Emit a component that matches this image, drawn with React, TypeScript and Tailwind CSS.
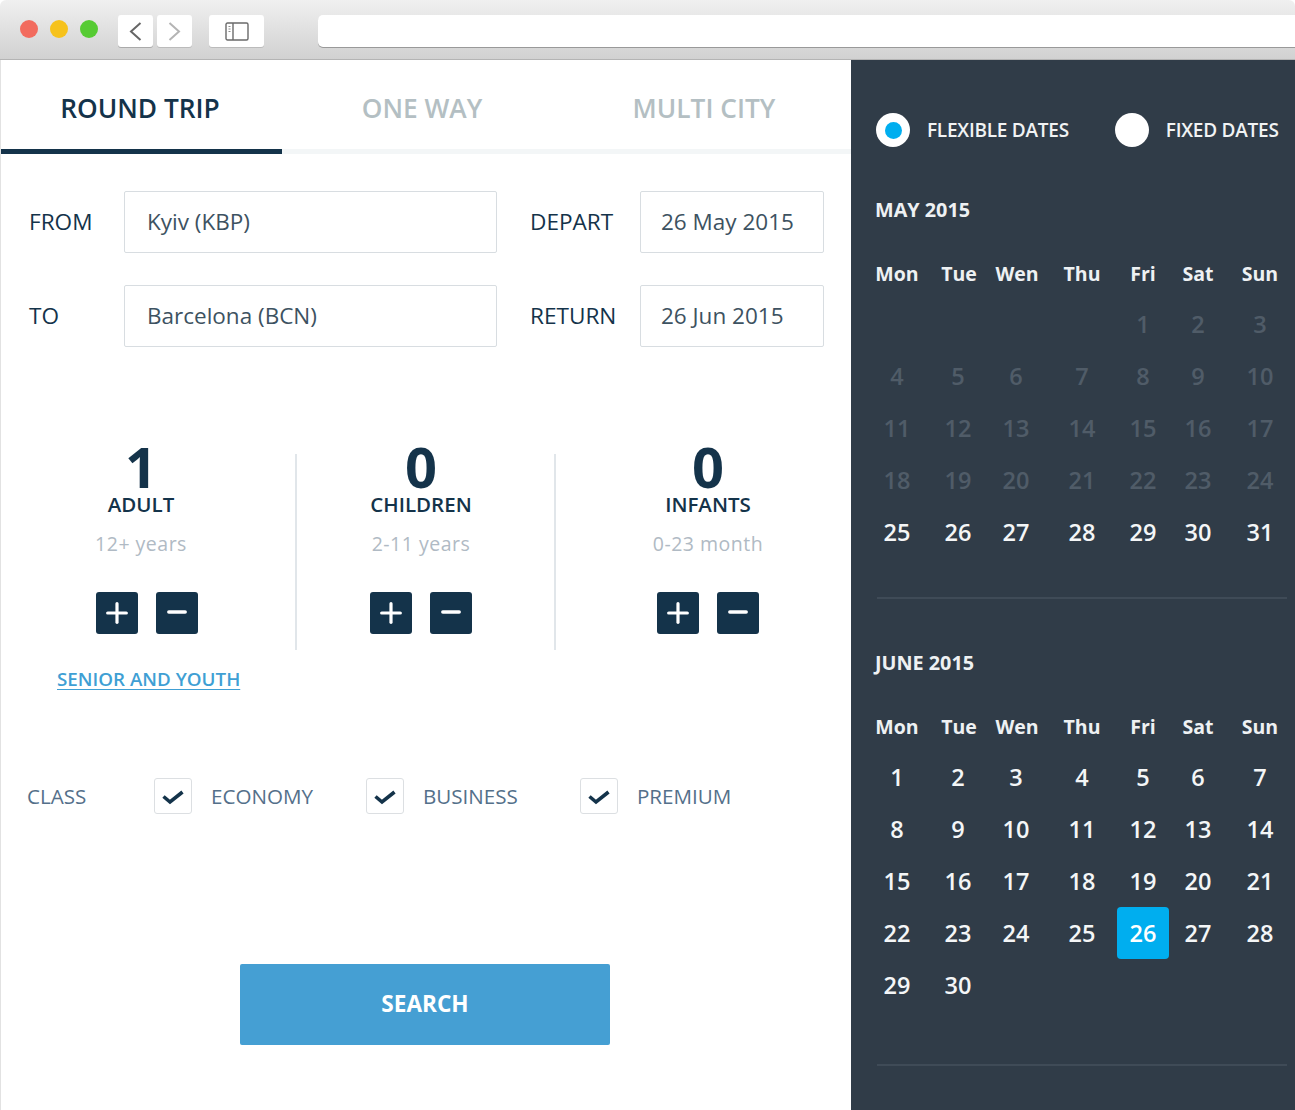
import { Minus, Plus } from "lucide-react";

const WEEK = ["Mon", "Tue", "Wen", "Thu", "Fri", "Sat", "Sun"];

const MAY = [
  ["", "", "", "", "1", "2", "3"],
  ["4", "5", "6", "7", "8", "9", "10"],
  ["11", "12", "13", "14", "15", "16", "17"],
  ["18", "19", "20", "21", "22", "23", "24"],
  ["25", "26", "27", "28", "29", "30", "31"],
];

const JUNE = [
  ["1", "2", "3", "4", "5", "6", "7"],
  ["8", "9", "10", "11", "12", "13", "14"],
  ["15", "16", "17", "18", "19", "20", "21"],
  ["22", "23", "24", "25", "26", "27", "28"],
  ["29", "30", "", "", "", "", ""],
];

function Toolbar() {
  return (
    <div className="flex h-[60px] items-start rounded-t-[6px] border-b border-[#b4b4b4] bg-gradient-to-b from-[#f0f0f0] to-[#d1d1d1] pt-[15px]">
      <div className="ml-[20px] mt-[5px] flex gap-[12px]">
        <div className="h-[18px] w-[18px] rounded-full bg-[#f26b5e]" />
        <div className="h-[18px] w-[18px] rounded-full bg-[#f6c21c]" />
        <div className="h-[18px] w-[18px] rounded-full bg-[#56cb33]" />
      </div>
      <div className="ml-[20px] flex h-[32px] w-[35px] items-center justify-center rounded-[3px] bg-white shadow-[0_1px_0_#aaa]">
        <svg width="13" height="19" viewBox="0 0 13 19" fill="none">
          <path d="M11.5 1L2 9.5l9.5 8.5" stroke="#666" strokeWidth="2" />
        </svg>
      </div>
      <div className="ml-[4px] flex h-[32px] w-[35px] items-center justify-center rounded-[3px] bg-white shadow-[0_1px_0_#bbb]">
        <svg width="13" height="19" viewBox="0 0 13 19" fill="none">
          <path d="M1.5 1L11 9.5 1.5 18" stroke="#b4b4b4" strokeWidth="2" />
        </svg>
      </div>
      <div className="ml-[17px] flex h-[32px] w-[55px] items-center justify-center rounded-[3px] bg-white shadow-[0_1px_0_#bbb]">
        <svg width="24" height="19" viewBox="0 0 24 19" fill="none">
          <rect x="1" y="1" width="22" height="17" rx="1.5" stroke="#6a6a6a" strokeWidth="1.4" />
          <path d="M8 1v17" stroke="#6a6a6a" strokeWidth="1.4" />
          <path d="M3.5 4.5h2M3.5 7h2M3.5 9.5h2" stroke="#8a8a8a" strokeWidth="1" />
        </svg>
      </div>
      <div className="ml-[54px] h-[32px] flex-1 rounded-l-[5px] bg-white shadow-[0_1px_0_#999]" />
    </div>
  );
}

function Tabs() {
  return (
    <div className="flex h-[94px] border-b-[5px] border-[#f3f6f7] text-[26.3px] font-semibold leading-[36px]">
      <div className="mb-[-5px] flex w-[281px] justify-center border-b-[5px] border-[#14334a] pr-[3px] pt-[30px] text-[#14334a]">ROUND TRIP</div>
      <div className="flex w-[282px] justify-center pr-[2px] pt-[30px] text-[#b4bfc3]">ONE WAY</div>
      <div className="flex w-[282px] justify-center pr-[2px] pt-[30px] text-[#b4bfc3]">MULTI CITY</div>
    </div>
  );
}

function Field({ label, value, labelW, w, pl }: { label: string; value: string; labelW: string; w: string; pl: string }) {
  return (
    <div className="flex items-center">
      <div className={`${labelW} pb-[1px] text-[22.6px] text-[#14334a]`}>{label}</div>
      <div className={`${w} ${pl} flex h-[62px] items-center rounded-[2px] border border-[#d8dde1] pb-[1px] text-[22.5px] text-[#3d5261]`}>{value}</div>
    </div>
  );
}

function Counter({ n, title, sub, cls, btnCls }: { n: string; title: string; sub: string; cls: string; btnCls?: string }) {
  return (
    <div className={`${cls} flex flex-col items-center`}>
      <div className="mt-[-10px] text-[56px] font-bold leading-[44px] text-[#14334a]">{n}</div>
      <div className="mt-[2px] text-[20.5px] font-semibold leading-[28px] text-[#14334a]">{title}</div>
      <div className="mt-[12px] text-[19.5px] leading-[28px] tracking-[0.5px] text-[#b0bac4]">{sub}</div>
      <div className={`${btnCls ?? ""} mt-[34px] flex gap-[18px]`}>
        <div className="flex h-[42px] w-[42px] items-center justify-center rounded-[3px] bg-[#14334a] text-white">
          <Plus size={32} strokeWidth={2.4} />
        </div>
        <div className="flex h-[42px] w-[42px] items-center justify-center rounded-[3px] bg-[#14334a] text-white">
          <Minus size={28} strokeWidth={3} className="mt-[-3px]" />
        </div>
      </div>
    </div>
  );
}

function ClassBox({ label, ml }: { label: string; ml: string }) {
  return (
    <div className={`${ml} flex items-center`}>
      <div className="flex h-[36px] w-[38px] items-center justify-center rounded-[3px] border border-[#dcdfe2]">
        <svg width="22" height="15" viewBox="0 0 22 15" fill="none" className="mt-[2px]">
          <path d="M1.5 6.5L8 12L20.5 2" stroke="#14334a" strokeWidth="3.6" />
        </svg>
      </div>
      <div className="ml-[19px] text-[20.6px] text-[#54708a]">{label}</div>
    </div>
  );
}

function Month({ title, rows, muted, today }: { title: string; rows: string[][]; muted: number; today?: string }) {
  return (
    <div>
      <div className="ml-[24px] text-[19.8px] font-bold leading-[26px] text-[#eef1f3]">{title}</div>
      <div className="mt-[38px] grid grid-cols-[62px_62px_54px_76px_46px_64px_60px] pl-[15px]">
        {WEEK.map((d) => (
          <div key={d} className="flex h-[26px] items-center justify-center text-[19.5px] font-bold text-[#eef1f3]">{d}</div>
        ))}
      </div>
      <div className="mt-[12px] grid grid-cols-[62px_60px_56px_76px_46px_64px_60px] grid-rows-[repeat(5,52px)] pl-[15px]">
        {rows.map((row, i) =>
          row.map((d, j) => (
            <div
              key={`${i}-${j}`}
              className={`flex items-center justify-center text-[23.5px] font-semibold ${i < muted ? "text-[#505c68]" : "text-[#f4f6f7]"}`}
            >
              {d === today ? (
                <div className="mt-[-2px] flex h-[52px] w-[52px] shrink-0 items-center justify-center rounded-[4px] bg-[#00aeef] pt-[2px] text-white">{d}</div>
              ) : (
                d
              )}
            </div>
          ))
        )}
      </div>
    </div>
  );
}

export default function App() {
  return (
    <div className="flex h-[1110px] w-[1295px] flex-col overflow-hidden bg-white font-['Open_Sans',sans-serif]">
      <Toolbar />
      <div className="flex flex-1">
        <div className="w-[851px] border-l border-[#e2e2e2]">
          <Tabs />
          <div className="flex flex-col gap-[32px] pt-[37px]">
            <div className="flex pl-[28px]">
              <Field label="FROM" value="Kyiv (KBP)" labelW="w-[95px]" w="w-[373px]" pl="pl-[22px]" />
              <div className="ml-[33px]">
                <Field label="DEPART" value="26 May 2015" labelW="w-[110px]" w="w-[184px]" pl="pl-[20px]" />
              </div>
            </div>
            <div className="flex pl-[28px]">
              <Field label="TO" value="Barcelona (BCN)" labelW="w-[95px]" w="w-[373px]" pl="pl-[22px]" />
              <div className="ml-[33px]">
                <Field label="RETURN" value="26 Jun 2015" labelW="w-[110px]" w="w-[184px]" pl="pl-[20px]" />
              </div>
            </div>
          </div>

          <div className="mt-[107px] flex h-[196px]">
            <Counter n="1" title="ADULT" sub="12+ years" cls="w-[280px]" btnCls="ml-[12px]" />
            <div className="ml-[14px] w-[2px] bg-[#e1e6ea]" />
            <Counter n="0" title="CHILDREN" sub="2-11 years" cls="w-[248px]" />
            <div className="ml-[9px] w-[2px] bg-[#e1e6ea]" />
            <Counter n="0" title="INFANTS" sub="0-23 month" cls="w-[295px] pl-[9px]" />
          </div>

          <div className="ml-[56px] mt-[16px] text-[18.8px] font-semibold leading-[26px] text-[#3f9fd4] underline underline-offset-[3px]">SENIOR AND YOUTH</div>

          <div className="mt-[86px] flex items-center pl-[26px]">
            <div className="w-[127px] text-[20.6px] text-[#54708a]">CLASS</div>
            <ClassBox label="ECONOMY" ml="" />
            <ClassBox label="BUSINESS" ml="ml-[53px]" />
            <ClassBox label="PREMIUM" ml="ml-[62px]" />
          </div>

          <div className="ml-[239px] mt-[150px] flex h-[81px] w-[370px] items-center justify-center rounded-[2px] bg-[#459fd3] pb-[2px] text-[22.6px] font-bold text-white">SEARCH</div>
        </div>

        <div className="w-[444px] bg-[#303c48] pt-[52px]">
          <div className="flex h-[36px] items-center">
            <div className="ml-[25px] flex h-[34px] w-[34px] items-center justify-center rounded-full bg-white">
              <div className="h-[17px] w-[17px] rounded-full bg-[#00aeef]" />
            </div>
            <div className="ml-[17px] text-[19px] font-semibold tracking-[-0.25px] text-[#f1f3f4]">FLEXIBLE DATES</div>
            <div className="ml-[46px] h-[34px] w-[34px] rounded-full bg-white" />
            <div className="ml-[17px] text-[19px] font-semibold tracking-[-0.25px] text-[#f1f3f4]">FIXED DATES</div>
          </div>
          <div className="mt-[49px]">
            <Month title="MAY 2015" rows={MAY} muted={4} />
          </div>
          <div className="ml-[26px] mt-[38px] h-[2px] w-[410px] bg-[#3f4b57]" />
          <div className="mt-[51px]">
            <Month title="JUNE 2015" rows={JUNE} muted={0} today="26" />
          </div>
          <div className="ml-[26px] mt-[52px] h-[2px] w-[410px] bg-[#3f4b57]" />
        </div>
      </div>
    </div>
  );
}
